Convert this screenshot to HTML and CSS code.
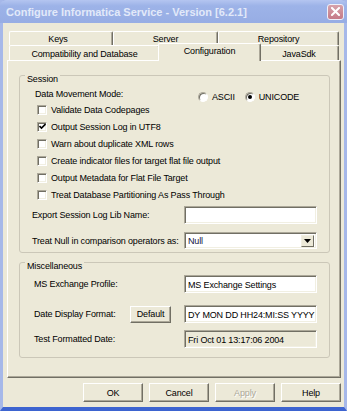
FILE: index.html
```html
<!DOCTYPE html>
<html lang="en">
<head>
    <meta charset="UTF-8">
    <title>Configure Informatica Service</title>
    <link rel="stylesheet" href="styles.css">
</head>
<body>
    <div class="window">
        <div class="title-bar">
            <span class="title-text">Configure Informatica Service - Version [6.2.1]</span>
            <span class="close-button">
                <svg width="9" height="9" viewBox="0 0 9 9"><path d="M1 1 L8 8 M8 1 L1 8" stroke="#fff" stroke-width="2" stroke-linecap="square"/></svg>
            </span>
        </div>

        <div class="client">
            <!-- Tab strip, two rows -->
            <div class="tabs">
                <div class="tab-row">
                    <div class="tab tab-keys">Keys</div>
                    <div class="tab tab-server">Server</div>
                    <div class="tab tab-repository">Repository</div>
                </div>
                <div class="tab-row">
                    <div class="tab tab-compat">Compatibility and Database</div>
                    <div class="tab tab-config selected">Configuration</div>
                    <div class="tab tab-java">JavaSdk</div>
                </div>
            </div>

            <div class="panel">
                <fieldset class="group group-session">
                    <legend>Session</legend>
                    <div class="mode-row">
                        <span class="mode-label">Data Movement Mode:</span>
                        <span class="radios">
                            <span class="radio"><span class="radio-circle"></span>ASCII</span>
                            <span class="radio"><span class="radio-circle checked"></span>UNICODE</span>
                        </span>
                    </div>
                    <div class="check-row"><span class="check"></span>Validate Data Codepages</div>
                    <div class="check-row"><span class="check checked"><svg width="7" height="7" viewBox="0 0 7 7"><path d="M0.5 3 L2.5 5 L6.5 1" fill="none" stroke="#000" stroke-width="1.6"/></svg></span>Output Session Log in UTF8</div>
                    <div class="check-row"><span class="check"></span>Warn about duplicate XML rows</div>
                    <div class="check-row"><span class="check"></span>Create indicator files for target flat file output</div>
                    <div class="check-row"><span class="check"></span>Output Metadata for Flat File Target</div>
                    <div class="check-row"><span class="check"></span>Treat Database Partitioning As Pass Through</div>
                    <div class="field-row row-export">
                        <span class="field-label">Export Session Log Lib Name:</span>
                        <span class="textbox"></span>
                    </div>
                    <div class="field-row row-null">
                        <span class="field-label">Treat Null in comparison operators as:</span>
                        <span class="combo">
                            <span class="combo-text">Null</span>
                            <span class="combo-button"><svg width="7" height="4" viewBox="0 0 7 4"><path d="M0 0 H7 L3.5 4 Z" fill="#000"/></svg></span>
                        </span>
                    </div>
                </fieldset>

                <fieldset class="group group-misc">
                    <legend>Miscellaneous</legend>
                    <div class="field-row row-profile">
                        <span class="field-label">MS Exchange Profile:</span>
                        <span class="textbox">MS Exchange Settings</span>
                    </div>
                    <div class="field-row row-date">
                        <span class="field-label">Date Display Format:</span>
                        <span class="button small-button">Default</span>
                        <span class="textbox">DY MON DD HH24:MI:SS YYYY</span>
                    </div>
                    <div class="field-row row-test">
                        <span class="field-label">Test Formatted Date:</span>
                        <span class="textbox disabled">Fri Oct 01 13:17:06 2004</span>
                    </div>
                </fieldset>
            </div>

            <div class="dialog-buttons">
                <span class="button">OK</span>
                <span class="button">Cancel</span>
                <span class="button disabled">Apply</span>
                <span class="button">Help</span>
            </div>
        </div>
    </div>
</body>
</html>
```

FILE: styles.css
```css
* {
    margin: 0;
    padding: 0;
    box-sizing: border-box;
}

body {
    font-family: 'Liberation Sans', Arial, sans-serif;
    font-size: 9px;
    letter-spacing: -0.15px;
    color: #000;
    background: #7d97dc;
}

.window {
    width: 347px;
    height: 411px;
    display: flex;
    flex-direction: column;
    background: #9cb0e4;
    border-left: 3px solid #a6b8e9;
    border-right: 3px solid #a6b8e9;
    border-bottom: 4px solid #3d64d0;
}

/* Title bar */
.title-bar {
    height: 23px;
    margin: 0 -3px;
    padding: 0 3px 0 6px;
    display: flex;
    align-items: center;
    justify-content: space-between;
    background: linear-gradient(#b4c5f0 0%, #9db3e8 25%, #97ade4 100%);
    border-radius: 6px 6px 0 0;
}

.title-text {
    font-family: 'Liberation Sans', Arial, sans-serif;
    font-weight: bold;
    font-size: 11px;
    letter-spacing: 0;
    color: #e2e9f9;
    padding-top: 1px;
}

.close-button {
    width: 17px;
    height: 16px;
    display: flex;
    align-items: center;
    justify-content: center;
    background: linear-gradient(#d6a2ab, #c57a87);
    border: 1px solid #eef0fa;
    border-radius: 3px;
}

/* Client area */
.client {
    flex: 1;
    background: #ece9d8;
    padding: 8px 3px 5px 4px;
    display: flex;
    flex-direction: column;
}

.tabs {
    margin: 0 2px;
    height: 29px;
    position: relative;
    z-index: 1;
}

.tab-row {
    display: flex;
    height: 14px;
}

.tab-row + .tab-row {
    height: 15px;
}

.tab {
    display: flex;
    align-items: center;
    justify-content: center;
    background: #ece9d8;
    border-top: 1px solid #fff;
    border-left: 1px solid #fff;
    border-right: 1px solid #716f64;
    box-shadow: inset -1px 0 0 #aca899;
    border-radius: 2px 2px 0 0;
    padding-top: 1px;
    white-space: nowrap;
}

.tab-keys { width: 104px; padding-right: 6px; }
.tab-server { width: 105px; }
.tab-repository { width: 121px; }
.tab-compat { width: 151px; }
.tab-config { width: 99px; }
.tab-java { width: 80px; }

.tab.selected {
    margin: -2px -2px -1px;
    width: 103px;
    padding-top: 0;
    padding-bottom: 3px;
    position: relative;
}

/* Property sheet page */
.panel {
    height: 318px;
    padding: 5px 11px 0;
    border: 1px solid;
    border-color: #fff #716f64 #716f64 #fff;
    box-shadow: inset -1px -1px 0 #aca899;
}

.group {
    border: 1px solid #cbc7b8;
    border-radius: 3px;
    min-width: 0;
    width: 311px;
}

.group legend {
    margin-left: 5px;
    padding: 8px 2px 0;
    line-height: 11px;
}

.group-session {
    padding: 2px 12px 3px 0;
}

.group-misc {
    padding: 0 12px 9px 0;
}

.mode-row {
    height: 14px;
    display: flex;
    align-items: center;
    padding-left: 15px;
}

.mode-label {
    width: 163px;
}

.radios {
    display: flex;
    gap: 10px;
    padding-top: 5px;
}

.radio {
    display: flex;
    align-items: center;
    gap: 4px;
}

.radio-circle {
    width: 10px;
    height: 10px;
    border-radius: 50%;
    background: #fff;
    border: 1px solid;
    border-color: #aca899 #fff #fff #aca899;
    box-shadow: inset 1px 1px 0 #716f64;
    display: flex;
    align-items: center;
    justify-content: center;
}

.radio-circle.checked::after {
    content: "";
    width: 4px;
    height: 4px;
    border-radius: 50%;
    background: #000;
}

.check-row {
    height: 17px;
    display: flex;
    align-items: center;
    gap: 4px;
    padding-left: 17px;
}

.check {
    width: 10px;
    height: 10px;
    background: #fff;
    border: 1px solid;
    border-color: #aca899 #fff #fff #aca899;
    box-shadow: inset 1px 1px 0 #716f64, inset -1px -1px 0 #f1efe2;
    display: flex;
    align-items: center;
    justify-content: center;
}

.field-row {
    display: flex;
    align-items: center;
    padding-left: 12px;
    white-space: nowrap;
}

.field-label {
    flex: 1;
}

.textbox {
    width: 133px;
    height: 18px;
    padding: 1px 3px 0;
    display: flex;
    align-items: center;
    white-space: nowrap;
    overflow: hidden;
    background: #fff;
    border: 1px solid;
    border-color: #aca899 #fff #fff #aca899;
    box-shadow: inset 1px 1px 0 #716f64, inset -1px -1px 0 #f1efe2;
}

.textbox.disabled {
    background: #ece9d8;
}

.row-export {
    margin-top: 3px;
}

.row-null {
    margin-top: 8px;
}

.combo {
    width: 133px;
    height: 17px;
    display: flex;
    align-items: center;
    justify-content: space-between;
    padding: 2px 2px 2px 3px;
    background: #fff;
    border: 1px solid;
    border-color: #aca899 #fff #fff #aca899;
    box-shadow: inset 1px 1px 0 #716f64, inset -1px -1px 0 #f1efe2;
}

.combo-text {
    color: #101040;
}

.combo-button {
    width: 13px;
    height: 12px;
    display: flex;
    align-items: center;
    justify-content: center;
    background: #ece9d8;
    border: 1px solid;
    border-color: #f1efe2 #716f64 #716f64 #f1efe2;
}

.group-misc .field-row {
    padding-left: 14px;
}

.row-profile {
    margin-top: 3px;
}

.row-date {
    margin-top: 12px;
}

.row-test {
    margin-top: 7px;
}

.row-date .field-label {
    flex: none;
    width: 96px;
}

.row-date .textbox {
    margin-left: auto;
}

.button {
    display: flex;
    align-items: center;
    justify-content: center;
    background: #ece9d8;
    border: 1px solid;
    border-color: #fff #716f64 #716f64 #fff;
    box-shadow: inset -1px -1px 0 #aca899;
}

.button.disabled {
    color: #aca899;
    text-shadow: 1px 1px 0 #fff;
}

.small-button {
    width: 41px;
    height: 17px;
}

.dialog-buttons {
    margin-top: 5px;
    display: flex;
    justify-content: flex-end;
    gap: 6px;
}

.dialog-buttons .button {
    width: 60px;
    height: 19px;
}
```
